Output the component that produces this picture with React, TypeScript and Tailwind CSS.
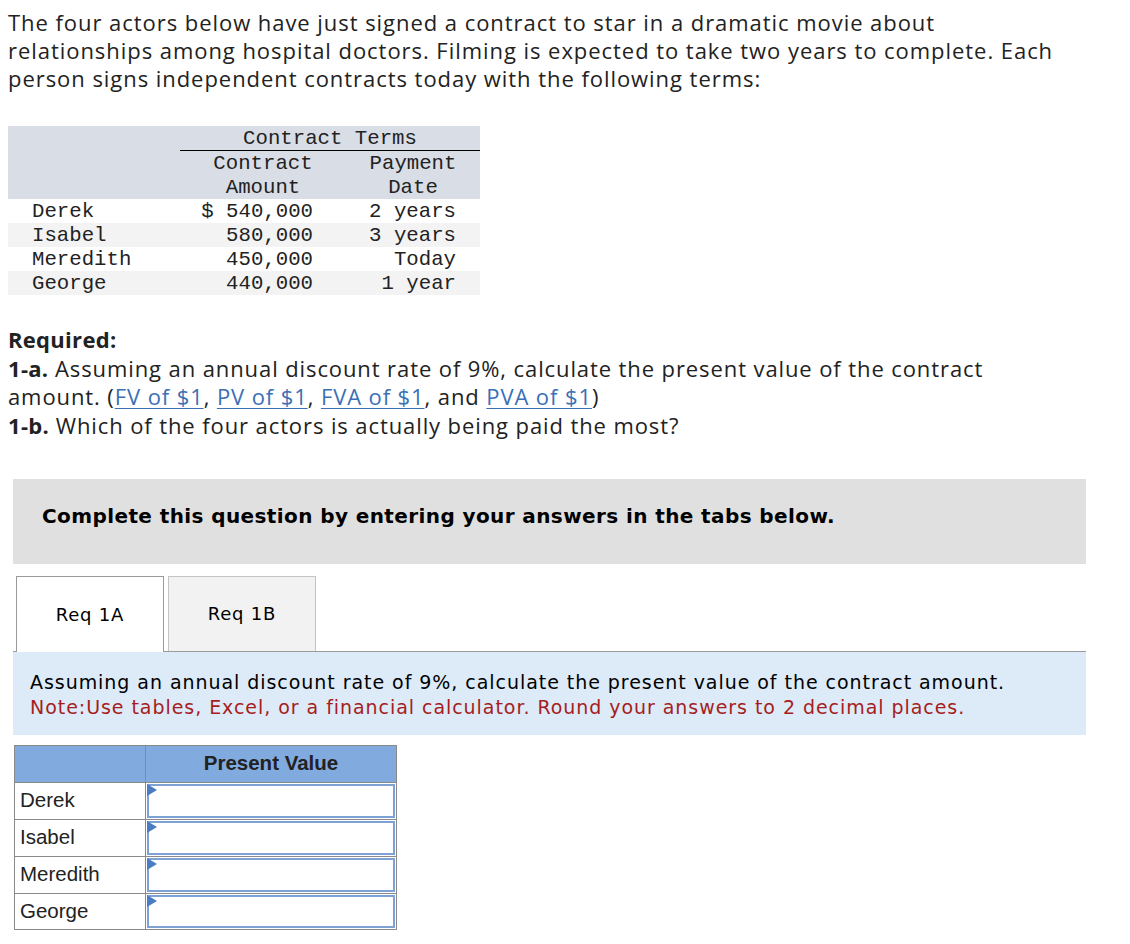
import React from "react";

const mono = { fontFamily: '"Liberation Mono", "Courier New", monospace' };
const sans = { fontFamily: '"Open Sans", "Liberation Sans", sans-serif' };

function Link({ children }: { children: React.ReactNode }) {
  return <span className="text-[#3b6fb6] underline underline-offset-[3px] decoration-1">{children}</span>;
}

function InputCell() {
  return (
    <div className="relative h-full p-[1px]">
      <div className="h-full w-full border-2 border-[#7ea2d6] bg-white" />
      <svg className="absolute left-[1px] top-[1px]" width="10" height="14" viewBox="0 0 10 14">
        <polygon points="0,0 10,6 0,12" fill="#4a7cc4" />
      </svg>
    </div>
  );
}

export default function App() {
  const rows = [
    { n: "Derek", a: "$ 540,000", d: "2 years", bg: "bg-white" },
    { n: "Isabel", a: "580,000", d: "3 years", bg: "bg-[#f3f3f3]" },
    { n: "Meredith", a: "450,000", d: "Today", bg: "bg-white" },
    { n: "George", a: "440,000", d: "1 year", bg: "bg-[#f3f3f3]" },
  ];
  const names = ["Derek", "Isabel", "Meredith", "George"];
  return (
    <div className="bg-white min-h-[944px] w-[1130px] text-[#1f1f1f]">
      <div className="pl-[8px] pt-[8px]" style={sans}>
        <p className="text-[22px] leading-[28px] tracking-[0.95px] text-[#222]">
          The four actors below have just signed a contract to star in a dramatic movie about
          <br />
          relationships among hospital doctors. Filming is expected to take two years to complete. Each
          <br />
          person signs independent contracts today with the following terms:
        </p>
      </div>

      <div className="ml-[8px] mt-[34px] w-[472px] text-[20.7px] text-[#222]" style={mono}>
        <div className="bg-[#d9dde6]">
          <div className="flex h-[25px]">
            <div className="w-[172px]" />
            <div className="w-[300px] border-b border-black text-center pt-[2px] leading-[22px]">Contract Terms</div>
          </div>
          <div className="flex h-[24px] pt-[2px] leading-[22px]">
            <div className="w-[172px]" />
            <div className="w-[166px] text-center">Contract</div>
            <div className="w-[134px] text-center">Payment</div>
          </div>
          <div className="flex h-[24px] pt-[2px] leading-[22px]">
            <div className="w-[172px]" />
            <div className="w-[166px] text-center">Amount</div>
            <div className="w-[134px] text-center">Date</div>
          </div>
        </div>
        {rows.map((r) => (
          <div key={r.n} className={`flex h-[24px] pt-[2px] leading-[22px] ${r.bg}`}>
            <div className="w-[172px] pl-[24px] whitespace-pre">{r.n}</div>
            <div className="w-[166px] pr-[33px] text-right whitespace-pre">{r.a}</div>
            <div className="w-[134px] pr-[24px] text-right whitespace-pre">{r.d}</div>
          </div>
        ))}
      </div>

      <div className="pl-[8px] mt-[30px] text-[22px] leading-[28.7px] tracking-[0.9px] text-[#222]" style={sans}>
        <div className="font-bold tracking-[0.3px]">Required:</div>
        <div>
          <span className="font-bold tracking-[0.3px]">1-a.</span> Assuming an annual discount rate of 9%, calculate the present value of the contract
          <br />
          amount. (<Link>FV of $1</Link>, <Link>PV of $1</Link>, <Link>FVA of $1</Link>, and <Link>PVA of $1</Link>)
        </div>
        <div>
          <span className="font-bold tracking-[0.3px]">1-b.</span> Which of the four actors is actually being paid the most?
        </div>
      </div>

      <div style={{ fontFamily: '"DejaVu Sans", Verdana, sans-serif' }}>
        <div className="ml-[13px] mt-[39px] w-[1073px] h-[85px] bg-[#e0e0e0] pl-[29px] pt-[25px]">
          <span className="font-bold text-[20px] leading-[24px] tracking-[0.4px] text-black">Complete this question by entering your answers in the tabs below.</span>
        </div>

        <div className="ml-[13px] mt-[12px] w-[1073px] flex items-end border-b border-[#9a9a9a]">
          <div className="ml-[3px] w-[148px] h-[76px] bg-white border border-[#9a9a9a] border-b-0 flex items-center justify-center text-[18px] tracking-[0.8px] text-black -mb-px relative z-10">
            Req 1A
          </div>
          <div className="ml-[4px] w-[148px] h-[75px] bg-[#f2f2f2] border border-[#c4c4c4] border-b-0 flex items-center justify-center text-[18px] tracking-[0.8px] text-black">
            Req 1B
          </div>
        </div>

        <div className="ml-[13px] w-[1073px] h-[83px] bg-[#ddeaf7] pl-[17px] pt-[18px] text-[19px] leading-[25px] tracking-[0.95px]">
          <div className="text-black">Assuming an annual discount rate of 9%, calculate the present value of the contract amount.</div>
          <div className="text-[#a51d1d]">Note:Use tables, Excel, or a financial calculator. Round your answers to 2 decimal places.</div>
        </div>
      </div>

      <div className="ml-[14px] mt-[10px] w-[383px] border border-[#8a8a8a] text-[20.5px]" style={{ fontFamily: '"Liberation Sans", Arial, sans-serif' }}>
        <div className="flex h-[37px] bg-[#81aadf] border-b border-[#8a8a8a]">
          <div className="w-[131px] border-r border-[#8a8a8a]" />
          <div className="flex-1 flex items-center justify-center font-bold text-[#222]">Present Value</div>
        </div>
        {names.map((n, i) => (
          <div key={n} className={`flex ${i < 3 ? "h-[37px] border-b border-[#8a8a8a]" : "h-[35px]"}`}>
            <div className="w-[131px] border-r border-[#8a8a8a] pl-[5px] flex items-center text-[#222]">{n}</div>
            <div className="flex-1">
              <InputCell />
            </div>
          </div>
        ))}
      </div>
    </div>
  );
}
